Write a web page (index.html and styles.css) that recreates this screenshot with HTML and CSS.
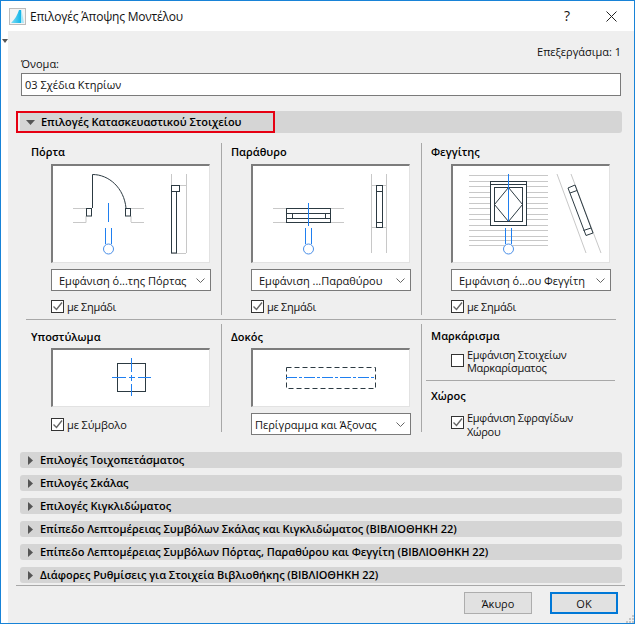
FILE: index.html
```html
<!DOCTYPE html>
<html lang="el">
<head>
<meta charset="utf-8">
<title>Επιλογές Άποψης Μοντέλου</title>
<link rel="stylesheet" href="styles.css">
</head>
<body>
<div class="window">
  <header class="titlebar">
    <svg class="app-icon" width="17" height="17" viewBox="0 0 17 17">
      <defs><linearGradient id="ag" x1="0" y1="0" x2="1" y2="0"><stop offset="0" stop-color="#7fdff6"/><stop offset="1" stop-color="#12b4e8"/></linearGradient></defs>
      <rect x="0.5" y="0.5" width="16" height="16" fill="#f4f4f4" stroke="#bcbcbc"/>
      <path d="M2 15 C6 11 8.5 7 10 2 H12 V15 Z" fill="url(#ag)"/>
      <path d="M12 2 H12.5 L15 15 H12 Z" fill="#a9e6f7"/>
    </svg>
    <span class="title">Επιλογές Άποψης Μοντέλου</span>
    <span class="help">?</span>
    <svg class="close" width="11" height="11" viewBox="0 0 11 11"><path d="M0.5 0.5 L10.5 10.5 M10.5 0.5 L0.5 10.5" stroke="#222" fill="none"/></svg>
  </header>
  <div class="body">
    <svg class="corner-arrow" width="6" height="4" viewBox="0 0 6 4"><path d="M0 0 H6 L3 4 Z" fill="#555"/></svg>
    <main class="panel">
      <div class="editable">Επεξεργάσιμα: 1</div>
      <label class="name-label">Όνομα:</label>
      <div class="name-input">03 Σχέδια Κτηρίων</div>

      <section class="section open">
        <svg class="tri" width="9" height="5" viewBox="0 0 9 5"><path d="M0 0 H9 L4.5 5 Z" fill="#555"/></svg>
        <span>Επιλογές Κατασκευαστικού Στοιχείου</span>
        <div class="highlight"></div>
      </section>

      <div class="row row-top">
        <div class="col">
          <h3>Πόρτα</h3>
          <div class="preview tall">
            <svg width="157" height="97" viewBox="2 2 157 97">
              <g class="wall"><path d="M22 44.5H35M22 58.5H35V52M80 44.5H93M80 58.5H93M80 52V58M120.5 10V89M135.5 10V89M120 89.5H135M120 21.5H135"/></g>
              <g class="dark"><path d="M41.5 44V10.5C58 10.5 73 24 75 44"/><rect x="35.5" y="44.5" width="5" height="7.5"/><rect x="74.5" y="44.5" width="5" height="7.5"/><rect x="120.5" y="27.5" width="5" height="61.5"/><rect x="120.5" y="21.5" width="8" height="6"/></g>
              <g class="blue"><path d="M57.5 39V58M54.5 64V80M60.5 64V80"/><circle cx="57.5" cy="85" r="5"/></g>
            </svg>
          </div>
          <div class="select"><span>Εμφάνιση ό...της Πόρτας</span><svg class="chev" width="9" height="5" viewBox="0 0 9 5"><path d="M0.5 0.5 L4.5 4.5 L8.5 0.5"/></svg></div>
          <div class="check"><span class="box on"><svg width="11" height="11" viewBox="0 0 11 11"><path d="M1.5 5.5 L4.5 8.5 L10 1.5"/></svg></span><span>με Σημάδι</span></div>
        </div>
        <div class="col">
          <h3>Παράθυρο</h3>
          <div class="preview tall">
            <svg width="157" height="97" viewBox="2 2 157 97">
              <g class="wall"><path d="M22 44.5H93M22 58.5H93M120.5 10V89M135.5 10V89M120 21.5H135M120 63.5H135"/></g>
              <g class="dark"><rect x="35.5" y="44.5" width="44" height="14"/><rect x="35.5" y="49.5" width="44" height="5"/><path d="M41.5 49V55M74.5 49V55"/><rect x="125.5" y="21.5" width="6" height="42"/><path d="M125 27.5H132M125 58.5H132"/></g>
              <g class="blue"><path d="M57.5 39V62M54.5 64V80M60.5 64V80"/><circle cx="57.5" cy="85" r="5"/></g>
            </svg>
          </div>
          <div class="select"><span>Εμφάνιση ...Παραθύρου</span><svg class="chev" width="9" height="5" viewBox="0 0 9 5"><path d="M0.5 0.5 L4.5 4.5 L8.5 0.5"/></svg></div>
          <div class="check"><span class="box on"><svg width="11" height="11" viewBox="0 0 11 11"><path d="M1.5 5.5 L4.5 8.5 L10 1.5"/></svg></span><span>με Σημάδι</span></div>
        </div>
        <div class="col">
          <h3>Φεγγίτης</h3>
          <div class="preview tall">
            <svg width="157" height="97" viewBox="2 2 157 97">
              <g class="wall"><path d="M18 11.5H97M18 17.5H97M18 22.5H97M18 28.5H97M18 33.5H97M18 39.5H97M18 44.5H97M18 50.5H97M18 55.5H97M18 61.5H97M18 66.5H97M18 72.5H97M18 76.5H97M18 81.5H97M106 10L135 89M120 10L150 89"/></g>
              <g class="window-white"><rect x="39.5" y="17.5" width="36" height="44"/></g>
              <g class="dark"><rect x="39.5" y="17.5" width="36" height="44"/><path d="M39 20.5H76"/><rect x="43.5" y="23.5" width="28" height="34"/><path d="M57.5 23.5L71.5 40.5L57.5 57.5L43.5 40.5Z"/><path d="M117 24L124 21L142 69L135 71.5Z"/><path d="M119 29L126 26.5M132.5 66.5L140 64"/></g>
              <g class="blue"><path d="M57.5 10V57M54.5 64V80M60.5 64V80"/><circle cx="57.5" cy="85" r="5"/></g>
            </svg>
          </div>
          <div class="select"><span>Εμφάνιση ό...ου Φεγγίτη</span><svg class="chev" width="9" height="5" viewBox="0 0 9 5"><path d="M0.5 0.5 L4.5 4.5 L8.5 0.5"/></svg></div>
          <div class="check"><span class="box on"><svg width="11" height="11" viewBox="0 0 11 11"><path d="M1.5 5.5 L4.5 8.5 L10 1.5"/></svg></span><span>με Σημάδι</span></div>
        </div>
      </div>

      <div class="row row-bottom">
        <div class="col">
          <h3>Υποστύλωμα</h3>
          <div class="preview short">
            <svg width="157" height="57" viewBox="2 2 157 57">
              <g class="dark"><rect x="66.5" y="15.5" width="28" height="28"/></g>
              <g class="blue dash"><path d="M61 29.5H75M78 29.5H84M87 29.5H100M80.5 10V24M80.5 27V33M80.5 36V48"/></g>
            </svg>
          </div>
          <div class="check check-gap"><span class="box on"><svg width="11" height="11" viewBox="0 0 11 11"><path d="M1.5 5.5 L4.5 8.5 L10 1.5"/></svg></span><span>με Σύμβολο</span></div>
        </div>
        <div class="col">
          <h3>Δοκός</h3>
          <div class="preview short">
            <svg width="157" height="57" viewBox="2 2 157 57">
              <g class="dark dashed"><rect x="35.5" y="19.5" width="89" height="21"/></g>
              <g class="blue dash-line"><path d="M35 29.5H125"/></g>
            </svg>
          </div>
          <div class="select select-left"><span>Περίγραμμα και Άξονας</span><svg class="chev" width="9" height="5" viewBox="0 0 9 5"><path d="M0.5 0.5 L4.5 4.5 L8.5 0.5"/></svg></div>
        </div>
        <div class="col col-stack">
          <div class="stack-a">
            <h3>Μαρκάρισμα</h3>
            <div class="check multi first"><span class="box"></span><span>Εμφάνιση Στοιχείων<br>Μαρκαρίσματος</span></div>
          </div>
          <div class="stack-b">
            <h3>Χώρος</h3>
            <div class="check multi second"><span class="box on"><svg width="11" height="11" viewBox="0 0 11 11"><path d="M1.5 5.5 L4.5 8.5 L10 1.5"/></svg></span><span>Εμφάνιση Σφραγίδων<br>Χώρου</span></div>
          </div>
        </div>
      </div>

      <div class="collapsed-list">
        <section class="section"><svg class="tri-r" width="5" height="9" viewBox="0 0 5 9"><path d="M0 0 V9 L5 4.5 Z" fill="#555"/></svg><span>Επιλογές Τοιχοπετάσματος</span></section>
        <section class="section"><svg class="tri-r" width="5" height="9" viewBox="0 0 5 9"><path d="M0 0 V9 L5 4.5 Z" fill="#555"/></svg><span>Επιλογές Σκάλας</span></section>
        <section class="section"><svg class="tri-r" width="5" height="9" viewBox="0 0 5 9"><path d="M0 0 V9 L5 4.5 Z" fill="#555"/></svg><span>Επιλογές Κιγκλιδώματος</span></section>
        <section class="section"><svg class="tri-r" width="5" height="9" viewBox="0 0 5 9"><path d="M0 0 V9 L5 4.5 Z" fill="#555"/></svg><span>Επίπεδο Λεπτομέρειας Συμβόλων Σκάλας και Κιγκλιδώματος (ΒΙΒΛΙΟΘΗΚΗ 22)</span></section>
        <section class="section"><svg class="tri-r" width="5" height="9" viewBox="0 0 5 9"><path d="M0 0 V9 L5 4.5 Z" fill="#555"/></svg><span>Επίπεδο Λεπτομέρειας Συμβόλων Πόρτας, Παραθύρου και Φεγγίτη (ΒΙΒΛΙΟΘΗΚΗ 22)</span></section>
        <section class="section"><svg class="tri-r" width="5" height="9" viewBox="0 0 5 9"><path d="M0 0 V9 L5 4.5 Z" fill="#555"/></svg><span>Διάφορες Ρυθμίσεις για Στοιχεία Βιβλιοθήκης (ΒΙΒΛΙΟΘΗΚΗ 22)</span></section>
      </div>

      <footer class="footer">
        <button class="btn">Άκυρο</button>
        <button class="btn primary">ΟΚ</button>
      </footer>
      <svg class="grip" width="8" height="8" viewBox="0 0 8 8"><path d="M6 0h2v2H6zM3 3h2v2H3zM6 3h2v2H6zM0 6h2v2H0zM3 6h2v2H3zM6 6h2v2H6z" fill="#c4c4c4"/></svg>
    </main>
  </div>
</div>
</body>
</html>
```
FILE: styles.css
```css
* { box-sizing: border-box; }
html, body { margin: 0; padding: 0; }
body { width: 635px; height: 624px; font-family: "Open Sans", "Noto Sans", sans-serif; font-size: 11px; color: #111; overflow: hidden; }
.window { width: 635px; height: 624px; border: 1px solid #1883d7; display: flex; flex-direction: column; background: #fff; }
.titlebar { height: 30px; flex: none; display: flex; align-items: center; padding-left: 8px; background: #fff; }
.app-icon { flex: none; }
.title { margin-left: 4px; font-size: 12px; letter-spacing: -0.2px; }
.help { margin-left: auto; font-size: 14px; width: 12px; text-align: center; margin-top: -2px; }
.close { margin: 0 17px 0 33px; }
.body { flex: 1; display: flex; position: relative; min-height: 0; }
.corner-arrow { position: absolute; left: 1px; top: 8px; }
.panel { position: relative; margin-left: 7px; flex: 1; background: #efefef; padding: 0 0 0 12px; display: flex; flex-direction: column; }
.editable { height: 15px; margin-top: 13px; padding-right: 13px; text-align: right; line-height: 15px; }
.name-label { height: 15px; margin-top: -3px; line-height: 15px; margin-left: 1px; }
.name-input { width: 600px; height: 23px; margin-left: 1px; margin-top: 2px; background: #fff; border: 1px solid #7a7a7a; line-height: 21px; padding-left: 3px; }
.section { position: relative; width: 602px; height: 16px; flex: none; background: #d5d5d5; border-radius: 3px; display: flex; align-items: center; font-weight: 600; line-height: 16px; padding-left: 6px; letter-spacing: -0.04px; color: #000; }
.section.open { height: 22px; margin-top: 15px; padding-left: 6px; }
.tri { margin-right: 6px; }
.tri-r { margin-right: 7px; margin-left: 2px; }
.highlight { position: absolute; left: -4px; top: 0; width: 259px; height: 22px; border: 2px solid #e60012; }
.row { position: relative; display: grid; grid-template-columns: 195px 200px 195px; margin-left: 6px; width: 590px; }
.row-top { height: 187px; border-bottom: 1px solid #a8a8a8; }
.row-bottom { height: 132px; }
.col { padding: 0 0 0 5px; position: relative; }
.col + .col { border-left: 1px solid #a8a8a8; padding-left: 9px; }
.row-top .col { margin-top: 10px; height: 172px; }
.row-bottom .col { margin-top: 4px; height: 108px; }
h3 { margin: 0; font-size: 11px; font-weight: 600; line-height: 15px; color: #000; }
.row-top h3 { margin-top: 1px; }
.row-bottom h3 { margin-top: 5px; }
.row-bottom .stack-a h3 { margin-top: 4px; }
.row-bottom .stack-b h3 { margin-top: 1px; }
.preview { margin-left: 20px; width: 159px; background: #fff; border: 1px solid #e2e2e2; border-top: 2px solid #7c7c7c; border-left: 2px solid #7c7c7c; }
.preview svg { display: block; }
.preview.tall { height: 99px; margin-top: 5px; }
.preview.short { height: 59px; margin-top: 4px; }
.wall path { fill: none; stroke: #c8c8c8; stroke-width: 1; }
.window-white rect { fill: #fff; }
.dark path, .dark rect { fill: none; stroke: #2c3a42; stroke-width: 1; }
.dashed rect { stroke-dasharray: 5 3; }
.blue path, .blue circle { fill: none; stroke: #1f7ff0; stroke-width: 1; }
.blue circle { fill: #fff; stroke: #4a8fe8; }
.dash-line path { stroke-dasharray: 11 2 3 2; }
.select { margin-left: 20px; margin-top: 6px; width: 160px; height: 22px; background: #fff; border: 1px solid #7a7a7a; display: flex; align-items: center; justify-content: space-between; padding: 0 5px 0 7px; white-space: nowrap; }
.select-left { padding-left: 3px; }
.chev path { fill: none; stroke: #666; stroke-width: 1; }
.check { display: flex; align-items: center; margin-left: 20px; margin-top: 9px; height: 13px; gap: 3px; letter-spacing: -0.3px; }
.check-gap { margin-top: 11px; letter-spacing: -0.1px; }
.box { width: 13px; height: 13px; flex: none; background: #fff; border: 1px solid #333; display: inline-flex; align-items: center; justify-content: center; }
.box path { fill: none; stroke: #666; stroke-width: 1.4; }
.col-stack { display: flex; flex-direction: column; }
.stack-a { height: 56px; flex: none; }
.stack-b { flex: none; margin-left: -5px; padding-left: 5px; padding-top: 6px; border-top: 1px solid #a8a8a8; margin-right: 1px; }
.multi { align-items: flex-start; height: 27px; line-height: 13px; }
.multi .box { margin-top: 5px; }
.multi.first { margin-top: 5px; }
.multi.first .box { margin-top: 6px; }
.multi.second { margin-top: 8px; line-height: 13.5px; }
.collapsed-list { display: flex; flex-direction: column; gap: 7px; margin-top: 0; }
.footer { margin-left: -4px; margin-top: 2px; width: 609px; height: 38px; padding: 6px 7px 0 0; border-top: 1px solid #a8a8a8; display: flex; justify-content: flex-end; gap: 18px; align-items: flex-start; }
.btn { width: 68px; height: 22px; font: inherit; color: #111; background: #e1e1e1; border: 1px solid #adadad; padding: 0; }
.btn.primary { border: 2px solid #0078d7; background: #e1e1e1; }
.grip { position: absolute; right: 0; bottom: 0; }
```
